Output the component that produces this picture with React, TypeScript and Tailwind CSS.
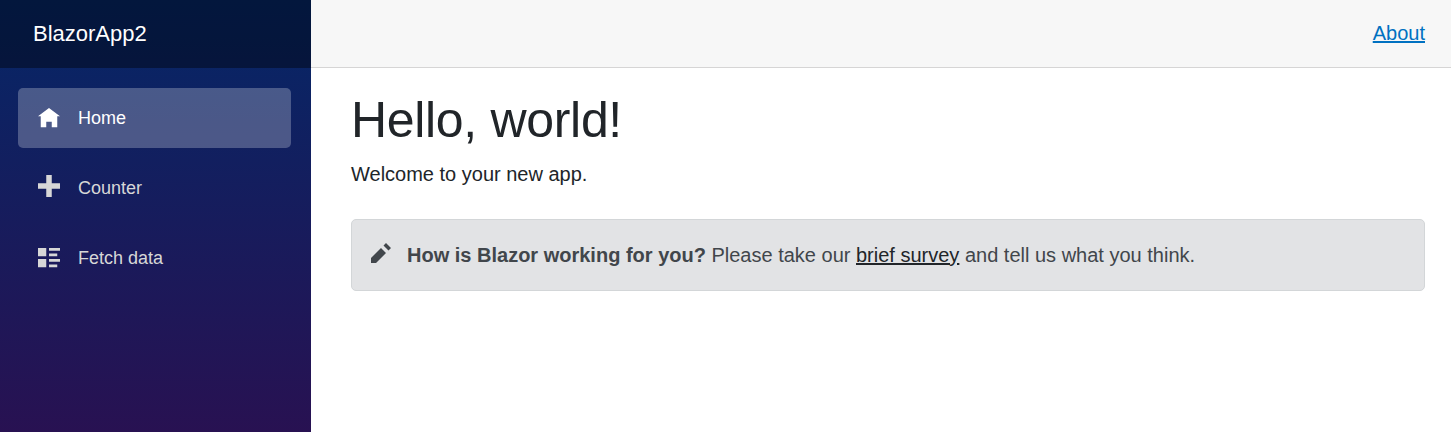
import React from "react";

type IconProps = { d: string; className?: string };

const icons = {
  home: "M4 0l-4 3h1v4h2v-2h2v2h2v-4l1 0-4-3z",
  plus: "M3 0v3h-3v2h3v3h2v-3h3v-2h-3v-3h-2z",
  list: "M0 0v3h3v-3h-3zm4 0v1h4v-1h-4zm0 2v1h3v-1h-3zm-4 2v3h3v-3h-3zm4 0v1h4v-1h-4zm0 2v1h3v-1h-3z",
  pencil: "M6 0l-1 1 2 2 1-1-2-2zm-2 2l-4 4v2h2l4-4-2-2z",
};

function Icon({ d, className }: IconProps) {
  return (
    <svg viewBox="0 0 8 8" fill="currentColor" aria-hidden="true" className={className}>
      <path d={d} />
    </svg>
  );
}

function NavItem({ label, icon, active, iconClass }: { label: string; icon: string; active?: boolean; iconClass: string }) {
  return (
    <a
      href="#"
      className={
        active
          ? "flex h-[60px] rounded-[5px] bg-white/25 pl-5 text-[18px] leading-[60px] text-white"
          : "flex h-[60px] rounded-[5px] pl-5 text-[18px] leading-[60px] text-[#d7d7d7]"
      }
    >
      <Icon d={icon} className={`mr-[18px] size-[22px] shrink-0 ${iconClass}`} />
      {label}
    </a>
  );
}

export default function App() {
  return (
    <div className="flex h-[432px] overflow-hidden bg-white font-['Liberation_Sans',Arial,sans-serif] text-[20px] leading-[30px] text-[#212529]">
      <aside className="w-[311px] shrink-0 bg-[linear-gradient(180deg,rgb(5,39,103)_0px,#3a0647_654px)]">
        <div className="flex h-[68px] items-center bg-black/40 pl-[33px] text-[22px] text-white">BlazorApp2</div>
        <nav className="flex flex-col gap-2.5 py-5 pr-5 pl-[18px]">
          <NavItem label="Home" icon={icons.home} iconClass="mt-[19.75px]" active />
          <NavItem label="Counter" icon={icons.plus} iconClass="mt-[17px]" />
          <NavItem label="Fetch data" icon={icons.list} iconClass="mt-[19.75px]" />
        </nav>
      </aside>
      <main className="min-w-0 flex-1">
        <header className="flex h-[68px] items-center justify-end border-b border-[#d6d5d5] bg-[#f7f7f7] pr-[26px] pb-0.5">
          <a href="#" className="text-[#0071c1] underline decoration-2 underline-offset-1">About</a>
        </header>
        <article className="pr-[26px] pl-10">
          <h1 className="mt-[22px] text-[50px] leading-[60px] tracking-[-0.32px]">Hello, world!</h1>
          <p className="mt-[9px]">Welcome to your new app.</p>
          <div className="mt-[30px] flex h-[72px] items-center rounded-[5px] border border-[#d3d6d8] bg-[#e2e3e5] pl-[19px] text-[#41464b]">
            <Icon d={icons.pencil} className="mr-4 mb-1 size-5" />
            <p>
              <strong className="font-bold">How is Blazor working for you?</strong> Please take our{" "}
              <a href="#" className="text-[#212529] underline decoration-2 underline-offset-1">brief survey</a> and tell us what you think.
            </p>
          </div>
        </article>
      </main>
    </div>
  );
}
